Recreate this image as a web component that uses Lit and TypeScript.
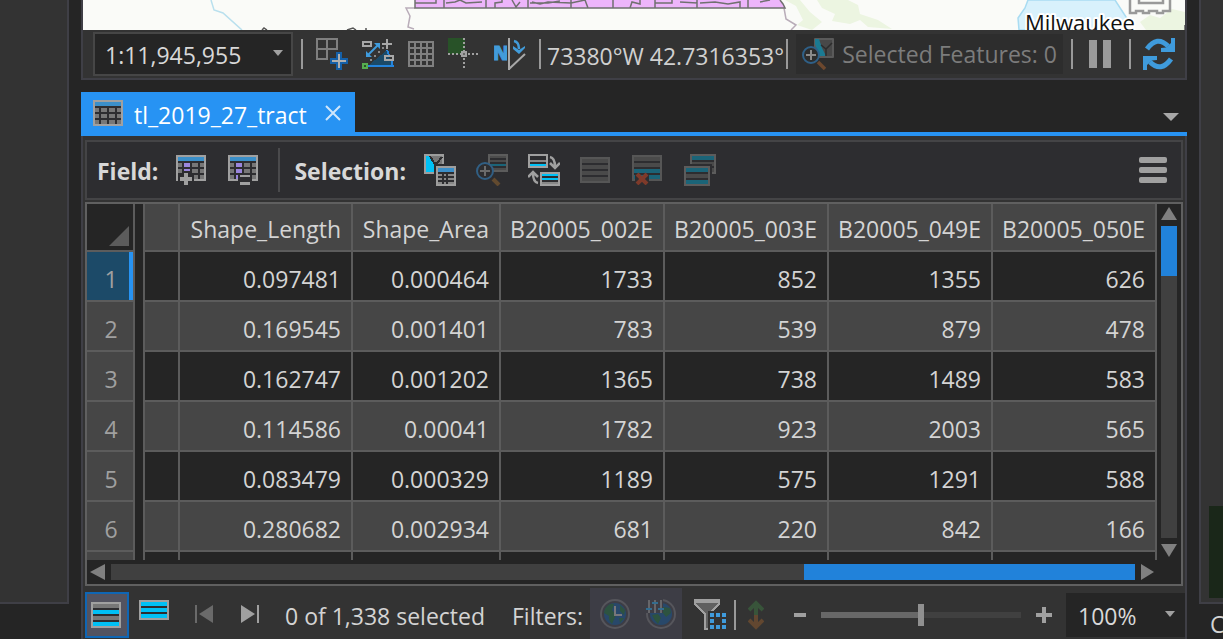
import { LitElement, html, svg, css } from "lit";
import { customElement, state } from "lit/decorators.js";
import { classMap } from "lit/directives/class-map.js";

const COLUMNS = ["Shape_Length", "Shape_Area", "B20005_002E", "B20005_003E", "B20005_049E", "B20005_050E"];
const ROWS = [
  ["0.097481", "0.000464", "1733", "852", "1355", "626"],
  ["0.169545", "0.001401", "783", "539", "879", "478"],
  ["0.162747", "0.001202", "1365", "738", "1489", "583"],
  ["0.114586", "0.00041", "1782", "923", "2003", "565"],
  ["0.083479", "0.000329", "1189", "575", "1291", "588"],
  ["0.280682", "0.002934", "681", "220", "842", "166"],
];

const icon = (w: number, h: number, body: unknown, crisp = true) => html`<svg
  width=${w} height=${h} viewBox="0 0 ${w} ${h}" fill="none" aria-hidden="true"
  shape-rendering=${crisp ? "crispEdges" : "auto"}>${body}</svg>`;

const box = (x: number, y: number, w: number, h: number, fill: string) =>
  svg`<rect x=${x} y=${y} width=${w} height=${h} fill=${fill} />`;

/* A framed list: outer border, dark ground, one bar per colour. */
const list = (x: number, y: number, w: number, bars: string[], edge: string, ground = "#2d2d30") => svg`
  ${box(x, y, w, bars.length * 6 + 2, edge)}
  ${box(x + 2, y + 2, w - 4, bars.length * 6 - 2, ground)}
  ${bars.map((c, i) => box(x + 2, y + 2 + i * 6, w - 4, 4, c))}`;

/* The same frame with thin bars, two pixels tall. */
const thinList = (x: number, y: number, w: number, h: number, start: number, bars: string[], edge: string) => svg`
  ${box(x, y, w, h, edge)}${box(x + 2, y + 2, w - 4, h - 4, "#2d2d30")}
  ${bars.map((c, i) => box(x + 2, y + start + i * 4, w - 4, 2, c))}`;

const grid = (accent: string) => svg`
  ${box(0, 0, 30, 26, "#a0a0a0")}${box(2, 2, 26, 22, "#2d2d30")}${box(2, 2, 26, 4, "#3b8fc9")}
  ${[8, 14, 20].map((y) => svg`${box(2, y, 4, 4, "#777")}${box(8, y, 6, 4, accent)}${box(16, y, 6, 4, "#777")}${box(24, y, 4, 4, "#777")}`)}`;

const icons = {
  addGrid: icon(32, 32, svg`<path d="M1 1H21V11H1ZM11 1V21H1V1" stroke="#7f7f7f" stroke-width="2"/>
    <path d="M14 20H20V14H26V20H32V26H26V32H20V26H14Z" fill="#1560a8"/><path d="M16 23H30M23 16V30" stroke="#b0b0b0" stroke-width="2"/>`),
  dynamic: icon(32, 30, svg`<path d="M7 26L25 11L30 26Z" fill="#1b4a68"/><path d="M25 11L27 16M30 22V27" stroke="#2484dc" stroke-width="2"/>
    <path d="M6 27H32" stroke="#2484dc" stroke-width="2"/><path d="M1 3H9V7H1ZM23 17H31V21H23Z" stroke="#a8a8a8" stroke-width="2"/>
    <path d="M20 5H30M25 0V10" stroke="#a8a8a8" stroke-width="2"/><path d="M6 16L16 6" stroke="#3f9bdc" stroke-width="2" shape-rendering="auto"/>
    <path d="M12 4H18V10ZM4 12V18H10Z" fill="#3f9bdc" shape-rendering="auto"/>
    ${[[8, 20], [12, 16], [16, 12], [20, 8]].map(([x, y]) => box(x, y, 2, 2, "#8a8a8a"))}
    ${box(0, 24, 6, 6, "#56ad4f")}${box(2, 26, 2, 2, "#285228")}`),
  mesh: icon(26, 26, svg`<path d="M1 1H25V25H1ZM7 1V25M13 1V25M19 1V25M1 7H25M1 13H25M1 19H25" stroke="#7f7f7f" stroke-width="2"/>`),
  snap: icon(32, 32, svg`${box(0, 0, 17, 16, "#285228")}<path d="M0 16H32M16 0V32" stroke="#a0a0a0" stroke-width="2" stroke-dasharray="2 2"/>
    <rect x="14" y="14" width="4" height="4" fill="#666" stroke="#a0a0a0" stroke-width="2"/>`),
  north: icon(32, 32, svg`<text x="-1" y="22" font-family="Open Sans, Noto Sans, sans-serif" font-weight="800" font-size="19" fill="#429cda" stroke="#429cda">N</text>
    ${box(13, 0, 5, 32, "#333")}${box(14, 0, 2, 32, "#a8a8a8")}<path d="M15 31L31 16" stroke="#a8a8a8" stroke-width="2"/>
    <path d="M20 3Q25 4 25 11" stroke="#429cda" stroke-width="2.5"/><path d="M19 8L25 12L31 8V10L25 16L19 11Z" fill="#429cda"/>`, false),
  zoomMap: icon(32, 32, svg`<rect x="12" y="0" width="20" height="20" rx="1" fill="#5a5a5a"/><rect x="14" y="2" width="16" height="16" fill="#484848"/>
    <path d="M13 1H17L20 10L24 18H17L13 6Z" fill="#1b7b93"/><path d="M19 7L24 11L30 5M24 11V18" stroke="#2c2c2c" stroke-width="1.5"/>
    <circle cx="9" cy="17" r="8" fill="#2d2d2d" stroke="#2f6088" stroke-width="2"/><path d="M4 17H14M9 12V22" stroke="#8a8a8a" stroke-width="2"/>
    <path d="M16 24L23 31" stroke="#6d482e" stroke-width="3.5"/>`, false),
  pause: icon(22, 28, svg`${box(0, 0, 8, 28, "#9b9b9b")}${box(14, 0, 8, 28, "#9b9b9b")}`),
  refresh: icon(32, 32, svg`<g><path d="M4 11Q14 -3 25 8" stroke="#3f9bdc" stroke-width="5"/><path d="M32 0V14H18V10L23 9.500L28 5V0Z" fill="#3f9bdc"/></g>
    <g transform="rotate(180 16 16)"><path d="M4 11Q14 -3 25 8" stroke="#3f9bdc" stroke-width="5"/><path d="M32 0V14H18V10L23 9.500L28 5V0Z" fill="#3f9bdc"/></g>`, false),
  table: icon(30, 26, grid("#777")),
  addField: icon(30, 30, svg`${grid("#777")}${box(8, 8, 6, 4, "#9a86dc")}${box(8, 14, 6, 2, "#9a86dc")}<path d="M2 20H6V16H14V20H18V28H2Z" fill="#2d2d30"/>
    ${box(0, 20, 2, 6, "#a0a0a0")}${box(4, 22, 12, 4, "#a0a0a0")}${box(8, 18, 4, 12, "#a0a0a0")}`),
  calcField: icon(30, 30, svg`${grid("#777")}${box(8, 8, 6, 4, "#9a86dc")}${box(8, 14, 6, 4, "#9a86dc")}${box(8, 20, 2, 4, "#9a86dc")}${box(10, 18, 14, 12, "#2d2d30")}${box(12, 20, 10, 2, "#a0a0a0")}${box(12, 27, 10, 3, "#a0a0a0")}`),
  selLocation: icon(32, 32, svg`${box(0, 0, 20, 20, "#9d9d9d")}${box(2, 2, 16, 16, "#777")}<path d="M2 2H6L10 10V18H2Z" fill="#00c0f5"/>
    <path d="M6 2L10 9H13L18 3" stroke="#2d2d30" stroke-width="2"/>${box(10, 10, 22, 22, "#2d2d30")}${box(12, 12, 20, 20, "#9d9d9d")}${box(14, 14, 16, 16, "#2d2d30")}${box(14, 14, 16, 4, "#3b8fc9")}
    ${[20, 24, 28].map((y) => svg`${box(14, y, 4, 2, "#888")}${box(20, y, 2, 2, "#888")}${box(24, y, 6, 2, "#888")}`)}`),
  zoomSel: icon(32, 32, svg`${thinList(12, 0, 20, 18, 2, ["#4c4c4c", "#4c4c4c", "#1b6478", "#4c4c4c"], "#5c5c5c")}<g shape-rendering="auto"><circle cx="9" cy="17" r="8" fill="#2d2d30" stroke="#315f84" stroke-width="2"/>
    <path d="M4 17H14M9 12V22" stroke="#6b6b6b" stroke-width="2"/><path d="M17 25L23 31" stroke="#624a2f" stroke-width="4"/></g>`),
  switchSel: icon(32, 32, svg`${thinList(0, 0, 20, 14, 2, ["#2d2d30", "#888", "#00c0f5"], "#a0a0a0")}${thinList(12, 18, 20, 14, 2, ["#00c0f5", "#00c0f5", "#888"], "#a0a0a0")}
    <g shape-rendering="auto" stroke="#a0a0a0" stroke-width="2.5"><path d="M22 3Q27 4 27 13M22 9L27 14L32 9"/><path d="M10 29Q5 28 5 19M0 23L5 18L10 23"/></g>`),
  clear: icon(32, 26, list(0, 0, 30, ["#4a4a4a", "#4a4a4a", "#4a4a4a", "#4a4a4a"], "#565656")),
  remove: icon(32, 30, svg`${list(0, 0, 30, ["#4a4a4a", "#4a4a4a", "#1b6478", "#1b6478"], "#565656")}<path d="M3 18L10 22L17 18V30H3Z" fill="#2d2d30"/>
    <path d="M5 19L15 29M15 19L5 29" stroke="#7e3a2a" stroke-width="4" shape-rendering="auto"/>`),
  copySel: icon(32, 32, svg`${list(6, 0, 26, ["#1b6478", "#4a4a4a", "#4a4a4a"], "#5c5c5c")}${box(0, 10, 28, 22, "#2d2d30")}${list(0, 12, 26, ["#1b6478", "#4a4a4a", "#1b6478"], "#5c5c5c")}`),
  menu: icon(28, 26, svg`<rect width="28" height="6" rx="2" fill="#a0a0a0"/><rect y="10" width="28" height="6" rx="2" fill="#a0a0a0"/><rect y="20" width="28" height="6" rx="2" fill="#a0a0a0"/>`, false),
  showAll: icon(30, 26, list(0, 0, 30, ["#777", "#00c0f5", "#777", "#00c0f5"], "#a0a0a0")),
  showSel: icon(30, 20, list(0, 0, 30, ["#00c0f5", "#00c0f5", "#00c0f5"], "#a0a0a0")),
  first: icon(18, 18, svg`${box(0, 0, 2, 18, "#6a6a6a")}<path d="M18 0V18L4 9Z" fill="#6a6a6a"/>`, false),
  next: icon(18, 18, svg`${box(16, 0, 2, 18, "#a0a0a0")}<path d="M0 0V18L14 9Z" fill="#a0a0a0"/>`, false),
  time: icon(30, 30, svg`<circle cx="15" cy="15" r="14" stroke="#56565c" stroke-width="2"/><circle cx="15" cy="15" r="11" fill="#28486a"/>
    <path d="M5 10Q9 4 14 5L12 11L16 16L12 25Q8 21 9 17L4 14ZM20 6L25 11L24 16L20 12ZM19 19L24 19L20 24Z" fill="#2d5340"/><path d="M15 7V16H22" stroke="#77777b" stroke-width="2"/>`, false),
  range: icon(30, 30, svg`<circle cx="15" cy="15" r="14" stroke="#56565c" stroke-width="2"/><circle cx="15" cy="15" r="11" fill="#28486a"/>
    <path d="M6 16L12 15L15 19L12 25Q8 21 6 16ZM17 8L24 9L25 14L20 18L17 14Z" fill="#2d5340"/><path d="M0 0H17V14H0Z" fill="#3d3d45"/>
    <path d="M3 1V14M9 1V14M15 1V14" stroke="#66666a" stroke-width="2"/><path d="M0 10H6M6 4H12M12 10H18" stroke="#336d90" stroke-width="2"/>`, false),
  funnel: icon(32, 31, svg`<path d="M1 1H25V5L15 15V30H11V15L1 5Z" fill="#606060" stroke="#a0a0a0" stroke-width="2"/>${box(2, 2, 22, 2, "#a0a0a0")}${box(14, 12, 18, 19, "#333")}
    ${[[16, 14], [22, 14], [28, 14], [16, 20], [28, 20], [16, 26], [22, 26], [28, 26]].map(([x, y]) => box(x, y, 4, 4, "#3f9bdc"))}`),
  sort: icon(16, 30, svg`<path d="M1 10L8 3L15 10M8 3V15" stroke="#38543a" stroke-width="4"/><path d="M1 20L8 27L15 20M8 27V15" stroke="#624730" stroke-width="4"/>`, false),
  minus: icon(12, 4, box(0, 0, 12, 4, "#a0a0a0")),
  plus: icon(16, 16, svg`${box(0, 6, 16, 4, "#a0a0a0")}${box(6, 0, 4, 16, "#a0a0a0")}`),
  close: icon(16, 16, svg`<path d="M1 1L15 15M15 1L1 15" stroke="#cfe6fb" stroke-width="2"/>`, false),
  caret: icon(10, 6, svg`<path d="M0 0H10L5 6Z" fill="#a0a0a0"/>`, false),
  bigCaret: icon(16, 8, svg`<path d="M0 0H16L8 8Z" fill="#a8a8a8"/>`, false),
  up: icon(16, 13, svg`<path d="M0 13H16L8 0Z" fill="#808080"/>`, false),
  down: icon(16, 13, svg`<path d="M0 0H16L8 13Z" fill="#808080"/>`, false),
  left: icon(15, 16, svg`<path d="M15 0V16L0 8Z" fill="#808080"/>`, false),
  right: icon(13, 16, svg`<path d="M0 0V16L13 8Z" fill="#808080"/>`, false),
  corner: icon(20, 20, svg`<path d="M20 0V20H0Z" fill="#5c5c5c"/>`, false),
};

const base = css`
  * { box-sizing: border-box; }
  svg { display: block; flex: none; }
  button {
    display: flex; align-items: center; justify-content: center; flex: none;
    margin: 0; padding: 0; border: 0; background: none; color: inherit; font: inherit; line-height: 30px;
  }
  select {
    appearance: none; margin: 0; border: 0; background: #252525; color: #d8d8d8;
    font: inherit; line-height: 30px; width: 100%; height: 100%;
  }
  .row { display: flex; align-items: center; }
  .drop { position: relative; flex: none; }
  .drop svg { position: absolute; right: 10px; top: 50%; margin-top: -4px; pointer-events: none; }
  .sep { flex: none; width: 2px; height: 30px; background: #999; }
`;

@customElement("map-strip")
export class MapStrip extends LitElement {
  static styles = css`
    :host { display: block; flex: none; height: 30px; background: #fafbf8; }
    svg { display: block; width: 100%; height: 30px; }
    .city { font: 22px "Open Sans", "Noto Sans", sans-serif; fill: #111; stroke: #fff; stroke-width: 4; paint-order: stroke; stroke-linejoin: round; }
  `;
  render() {
    return html`<svg viewBox="83 0 1102 30" preserveAspectRatio="xMinYMax slice" fill="none" role="img" aria-label="Map">
      <path d="M817 0L822 8L835 14L832 21L850 24L860 20L868 27L892 29L878 20L860 14L858 5L848 0ZM785 0L796 6L803 20L797 25L812 30L822 22L810 12L800 0ZM1140 22L1150 15L1160 18L1172 9L1185 12V30H1146Z" fill="#ecf5e1"/>
      <path d="M211 0L214 10L223 13L242 30" stroke="#b9e0ee" stroke-width="1.500"/>
      <path d="M1028 0L1025 8L1018 18L1019 30H1122L1128 20L1115 0Z" fill="#d8f1fc" stroke="#a9dcf2" stroke-width="1.500"/>
      <path d="M415 8H406L410 16L408 27L414 29M784 8L786 19L796 25L791 30" stroke="#b9adb9" stroke-width="1.500"/>
      <path d="M415 0H780L785 8H415Z" fill="#edb5fb"/>
      <path d="M415 0V8H785L783 4L780 0M444 0V8M415 3H436V0M486 0V8M446 3L455 2L460 0L466 3L482 2M495 8V3L502 2V0M512 0L516 7L520 2M528 0V8M530 3H548L560 1M532 2L540 4L548 2L571 3M571 0V8M571 3L585 0L588 8M613 0V8M630 8L632 2L640 4V0M655 0V8M655 3H672V0M680 2L697 3V0M697 0V8M700 3L715 2L728 4L740 2V8M748 0V8M760 2L770 0" stroke="#707070" stroke-width="1.500"/>
      <path d="M1130 0V13H1136V11H1143V13H1149V11H1157V13H1163V11H1170V0M1139 0V3H1163V0" stroke="#999" stroke-width="2.500"/>
      <path d="M262 30L264 28L267 30M347 30L353 28L356 30M366 28V30M1185 25V30" stroke="#555" stroke-width="1.500"/>
      <text class="city" x="1025" y="31">Milwaukee</text>
    </svg>`;
  }
}

@customElement("map-status-bar")
export class MapStatusBar extends LitElement {
  static styles = [base, css`
    :host { display: block; flex: none; }
    .row { height: 48px; padding: 0 10px; background: #333; }
    .scale { width: 200px; height: 44px; margin-right: 8px; }
    .scale select { border: 2px solid #464646; padding: 2px 10px 0; }
    .tools { display: flex; align-items: center; gap: 14px; margin: 0 13px; }
    .coords { flex: 1; margin-left: 6px; color: #d0d0d0; white-space: nowrap; overflow: hidden; line-height: 32px; padding-top: 4px; }
    .features { height: 40px; gap: 8px; padding: 0 6px; margin: 0 8px; background: #2d2d2d; color: #7c7c7c; line-height: 32px; }
    .pause { margin: 0 18px 0 16px; }
    .refresh { margin-left: 12px; }
  `];
  render() {
    return html`<div class="row">
      <div class="drop scale"><select aria-label="Map scale"><option>1:11,945,955</option></select>${icons.caret}</div>
      <span class="sep"></span>
      <div class="tools">
        <button aria-label="Constraints">${icons.addGrid}</button>
        <button aria-label="Dynamic constraints">${icons.dynamic}</button>
        <button aria-label="Grid">${icons.mesh}</button>
        <button aria-label="Snapping">${icons.snap}</button>
        <button aria-label="Corrections">${icons.north}</button>
      </div>
      <span class="sep"></span>
      <span class="coords">73380°W 42.7316353°</span>
      <span class="sep"></span>
      <button class="features" disabled>${icons.zoomMap}<span>Selected Features: 0</span></button>
      <span class="sep"></span>
      <button class="pause" aria-label="Pause drawing">${icons.pause}</button>
      <span class="sep"></span>
      <button class="refresh" aria-label="Refresh">${icons.refresh}</button>
    </div>`;
  }
}

@customElement("attribute-toolbar")
export class AttributeToolbar extends LitElement {
  static styles = [base, css`
    :host { display: block; flex: none; }
    .row { height: 60px; padding: 0 14px 0 10px; border: 2px solid #444446; background: #2d2d30; }
    .label { font-weight: 700; color: #d8d8d8; padding-top: 2px; }
    .group { display: flex; align-items: center; gap: 22px; margin-left: 18px; }
    .selection { gap: 20px; }
    .divider { width: 2px; height: 44px; margin: 0 14px 0 20px; background: #4a4a4c; }
    .menu { margin-left: auto; }
  `];
  render() {
    return html`<div class="row">
      <span class="label">Field:</span>
      <div class="group"><button aria-label="Add field">${icons.addField}</button><button aria-label="Calculate field">${icons.calcField}</button></div>
      <span class="divider"></span>
      <span class="label">Selection:</span>
      <div class="group selection">
        <button aria-label="Select by attributes">${icons.selLocation}</button>
        <button aria-label="Zoom to selection" disabled>${icons.zoomSel}</button>
        <button aria-label="Switch selection">${icons.switchSel}</button>
        <button aria-label="Clear selection" disabled>${icons.clear}</button>
        <button aria-label="Delete selection" disabled>${icons.remove}</button>
        <button aria-label="Copy selection" disabled>${icons.copySel}</button>
      </div>
      <button class="menu" aria-label="Menu">${icons.menu}</button>
    </div>`;
  }
}

@customElement("attribute-grid")
export class AttributeGrid extends LitElement {
  @state() private current = 0;

  static styles = [base, css`
    :host { display: flex; flex-direction: column; flex: 1; min-height: 0; border: 2px solid #606060; background: #252525; }
    .body { display: flex; flex: 1; min-height: 0; }
    .view { flex: 1; min-width: 0; overflow: hidden; }
    table { width: 100%; table-layout: fixed; border-collapse: separate; border-spacing: 0; }
    col.head { width: 48px; } col.gap { width: 10px; } col.sliver { width: 35px; }
    col.length { width: 173px; } col.area { width: 148px; }
    th, td {
      height: 50px; padding: 6px 10px 0 0; text-align: right; white-space: nowrap; font-weight: 400; line-height: 30px;
      color: #d4d4d4; border: 0 solid #5c5c5c; border-width: 0 2px 2px 0;
    }
    thead th, thead td { height: 48px; padding-top: 4px; background: #464646; }
    tbody tr:nth-child(even) td { background: #464646; }
    tbody th { padding: 6px 0 0 2px; text-align: center; color: #a0a0a0; background: #464646; }
    tbody tr.current th { background: #1c4a68; box-shadow: inset -4px 0 #2793f3; }
    thead td.corner { padding: 18px 4px 0 0; background: #252525; }
    .corner svg { margin-left: auto; }
    thead td.gap, tbody tr td.gap { padding: 0; border-bottom: 0; background: #252525; }
    .vscroll { display: flex; flex-direction: column; align-items: center; gap: 6px; width: 24px; padding: 3px 0 3px; }
    .vtrack { flex: 1; width: 16px; background: #404040; }
    .vthumb { height: 50px; background: #2182da; }
    .hscroll { display: flex; align-items: center; gap: 6px; height: 24px; padding: 0 27px 0 3px; }
    .htrack { flex: 1; height: 16px; background: #404040; display: flex; justify-content: flex-end; }
    .hthumb { width: 331px; background: #2182da; }
  `];

  render() {
    return html`
      <div class="body">
        <div class="view"><table>
          <colgroup><col class="head"><col class="gap"><col class="sliver"><col class="length"><col class="area"><col><col><col><col></colgroup>
          <thead><tr><td class="corner">${icons.corner}</td><td class="gap"></td><td></td>${COLUMNS.map((c) => html`<th scope="col">${c}</th>`)}</tr></thead>
          <tbody>
            ${ROWS.map((r, i) => html`<tr class=${classMap({ current: i === this.current })} @click=${() => (this.current = i)}>
              <th scope="row">${i + 1}</th><td class="gap"></td><td></td>${r.map((v) => html`<td>${v}</td>`)}</tr>`)}
            <tr><th></th><td class="gap"></td><td></td>${COLUMNS.map(() => html`<td></td>`)}</tr>
          </tbody>
        </table></div>
        <div class="vscroll"><button aria-label="Scroll up">${icons.up}</button><div class="vtrack"><div class="vthumb"></div></div><button aria-label="Scroll down">${icons.down}</button></div>
      </div>
      <div class="hscroll"><button aria-label="Scroll left">${icons.left}</button><div class="htrack"><div class="hthumb"></div></div><button aria-label="Scroll right">${icons.right}</button></div>`;
  }
}

@customElement("attribute-footer")
export class AttributeFooter extends LitElement {
  static styles = [base, css`
    :host { display: block; flex: none; }
    .row { height: 53px; padding-left: 2px; background: #333; align-items: flex-start; }
    .mode { width: 44px; height: 46px; margin-top: 6px; padding-right: 2px; border: 2px solid #0f66b5; background: #535360; }
    .only { margin: 14px 26px 0 10px; }
    .step { margin: 19px 28px 0 0; }
    .text { flex: none; color: #d4d4d4; line-height: 30px; margin-top: 15px; white-space: nowrap; }
    .count { width: 227px; margin-left: -2px; }
    .label { width: 78px; }
    .filters { display: flex; justify-content: space-between; align-items: center; width: 92px; height: 51px; margin-top: 2px; padding: 0 6px 0 10px; background: #3d3d45; }
    .funnel { margin: 13px 8px 0 12px; }
    .sep { margin-top: 14px; }
    .sort { margin: 14px 0 0 12px; }
    .zoom { display: flex; align-items: center; flex: 1; gap: 15px; height: 30px; margin: 14px 14px 0 30px; }
    input {
      appearance: none; flex: 1; min-width: 0; height: 22px; margin: 0;
      background: linear-gradient(to right, #686868 50%, #404040 50%) center / 100% 6px no-repeat;
    }
    input::-webkit-slider-thumb { appearance: none; width: 6px; height: 22px; background: #909090; border: 0; border-radius: 0; }
    .percent { width: 119px; height: 44px; margin-top: 7px; }
    .percent select { padding: 2px 12px 0; }
  `];
  render() {
    return html`<div class="row">
      <button class="mode" aria-label="Show all records">${icons.showAll}</button>
      <button class="only" aria-label="Show selected records">${icons.showSel}</button>
      <button class="step" aria-label="First record" disabled>${icons.first}</button>
      <button class="step" aria-label="Next record">${icons.next}</button>
      <span class="text count">0 of 1,338 selected</span>
      <span class="text label">Filters:</span>
      <div class="filters"><button aria-label="Time filter" disabled>${icons.time}</button><button aria-label="Range filter" disabled>${icons.range}</button></div>
      <button class="funnel" aria-label="Extent filter">${icons.funnel}</button>
      <span class="sep"></span>
      <button class="sort" aria-label="Move to record" disabled>${icons.sort}</button>
      <div class="zoom">
        <button aria-label="Zoom out">${icons.minus}</button>
        <input type="range" min="0" max="100" value="50" aria-label="Zoom">
        <button aria-label="Zoom in">${icons.plus}</button>
      </div>
      <div class="drop percent"><select aria-label="Zoom percent"><option>100%</option></select>${icons.caret}</div>
    </div>`;
  }
}

@customElement("app-root")
export class AppRoot extends LitElement {
  static styles = [base, css`
    :host { display: flex; height: 100vh; overflow: hidden; background: #252525; color: #d4d4d4; font: 23px/30px "Open Sans", "Noto Sans", sans-serif; }
    .side { flex: none; display: flex; flex-direction: column; }
    .left { width: 69px; margin-right: 12px; }
    .right { width: 24px; margin-left: 12px; overflow: hidden; }
    .dock { flex: 1; background: #333; border: 0 solid #3f3f46; border-width: 0 2px 2px 0; }
    .right .dock { border-width: 0 0 2px 2px; padding: 0 0 4px 8px; display: flex; align-items: flex-end; }
    .preview { flex: 1; height: 92px; background: #1a2719; }
    .under { height: 35px; padding: 5px 0 0 11px; }
    .main { flex: 1; min-width: 0; display: flex; flex-direction: column; }
    .map { border: 2px solid #3f3f46; border-top: 0; flex: none; }
    .tabs { display: flex; align-items: center; justify-content: space-between; height: 44px; margin-top: 12px; border-bottom: 4px solid #2793f3; padding-right: 8px; }
    .tab { display: flex; align-items: center; height: 40px; padding: 2px 14px 0 12px; background: #2793f3; color: #fff; }
    .tab a { color: inherit; text-decoration: none; margin: 4px 18px 0 11px; line-height: 30px; }
    .more { margin-top: 10px; }
    .panel { flex: 1; min-height: 0; display: flex; flex-direction: column; background: #333; border: 0 solid #3f3f46; border-width: 0 2px; }
    .content { flex: 1; min-height: 0; display: flex; flex-direction: column; gap: 2px; padding: 4px 2px 0; }
  `];
  render() {
    return html`
      <aside class="side left"><div class="dock"></div><div class="under"></div></aside>
      <main class="main">
        <section class="map"><map-strip></map-strip><map-status-bar></map-status-bar></section>
        <nav class="tabs">
          <div class="tab">${icons.table}<a href="#table">tl_2019_27_tract</a><button aria-label="Close table">${icons.close}</button></div>
          <button class="more" aria-label="Open tables">${icons.bigCaret}</button>
        </nav>
        <section class="panel">
          <div class="content"><attribute-toolbar></attribute-toolbar><attribute-grid></attribute-grid></div>
          <attribute-footer></attribute-footer>
        </section>
      </main>
      <aside class="side right"><div class="dock"><div class="preview"></div></div><div class="under">C</div></aside>`;
  }
}
